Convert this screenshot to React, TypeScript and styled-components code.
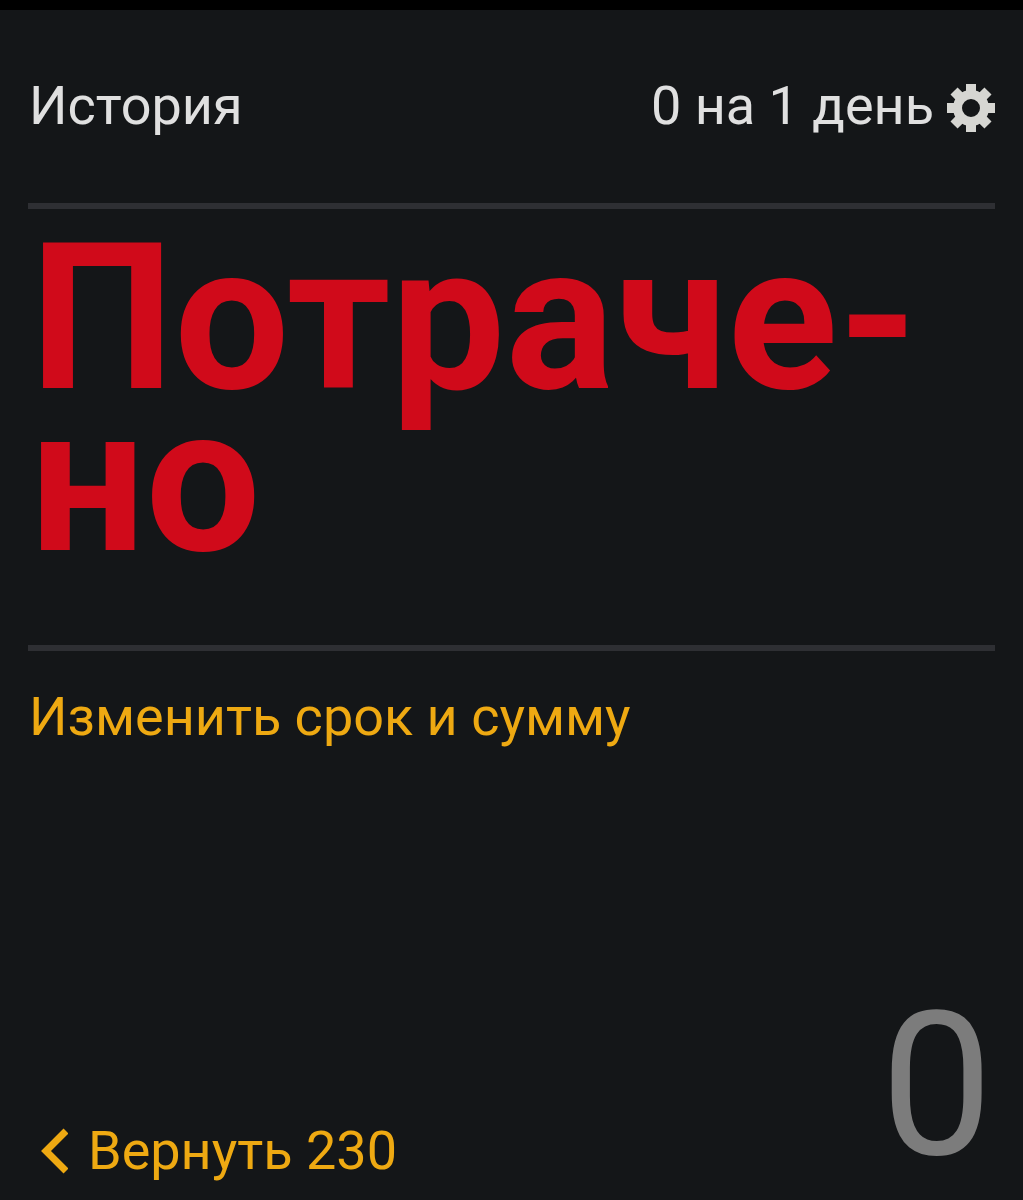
import styled, { createGlobalStyle } from "styled-components";

const GlobalStyle = createGlobalStyle`
  html, body {
    margin: 0;
    padding: 0;
    background: #141618;
  }
`;

const Screen = styled.div`
  box-sizing: border-box;
  width: 1023px;
  height: 1200px;
  overflow: hidden;
  background: #141618;
  border-top: 10px solid #000;
  padding: 0 28px;
  font-family: Roboto, "Liberation Sans", sans-serif;
  display: flex;
  flex-direction: column;
`;

const Header = styled.div`
  display: flex;
  justify-content: space-between;
  align-items: center;
  height: 199px;
  padding: 0 0 2px 1px;
  box-sizing: border-box;
  color: #e0e0e0;
  font-size: 54px;
  border-bottom: 6px solid #2e2f33;
`;

const Counter = styled.div`
  display: flex;
  align-items: center;
  gap: 13px;
`;

const GearIcon = styled.svg`
  margin-top: 4px;
`;

const Title = styled.div`
  box-sizing: border-box;
  height: 442px;
  padding: 0 0 0 2px;
  color: #d00a1a;
  font-size: 204px;
  font-weight: 700;
  line-height: 162px;
  border-bottom: 6px solid #2e2f33;
`;

const TitleText = styled.div`
  padding-top: 29px;
`;

const Action = styled.div`
  padding: 33px 0 0 1px;
  color: #eea912;
  font-size: 54px;
  line-height: 66px;
`;

const Footer = styled.div`
  margin-top: auto;
  display: flex;
  justify-content: space-between;
  align-items: flex-end;
  padding: 0 2px 9px 12px;
`;

const Back = styled.div`
  display: flex;
  align-items: center;
  gap: 20px;
  margin-bottom: 7px;
  color: #eea912;
  font-size: 54px;
  line-height: 66px;
`;

const Balance = styled.div`
  color: #7c7c7c;
  font-size: 200px;
  font-weight: 400;
  line-height: 210px;
`;

function Gear() {
  const teeth = [0, 45, 90, 135, 180, 225, 270, 315];
  return (
    <GearIcon width="48" height="48" viewBox="0 0 48 48" fill="#d6d6d2">
      <circle cx="24" cy="24" r="13.5" fill="none" stroke="#d6d6d2" strokeWidth="9" />
      {teeth.map((angle) => (
        <rect key={angle} x="19" y="0" width="10" height="9" transform={`rotate(${angle} 24 24)`} />
      ))}
    </GearIcon>
  );
}

function Chevron() {
  return (
    <svg width="28" height="46" viewBox="0 0 28 46" fill="none">
      <path d="M26 3L6 23l20 20" stroke="#eea912" strokeWidth="7" />
    </svg>
  );
}

export default function App() {
  return (
    <Screen>
      <GlobalStyle />
      <Header>
        <span>История</span>
        <Counter>
          <span>0 на 1 день</span>
          <Gear />
        </Counter>
      </Header>
      <Title>
        <TitleText>
          Потраче-
          <br />
          но
        </TitleText>
      </Title>
      <Action>Изменить срок и сумму</Action>
      <Footer>
        <Back>
          <Chevron />
          <span>Вернуть 230</span>
        </Back>
        <Balance>0</Balance>
      </Footer>
    </Screen>
  );
}
